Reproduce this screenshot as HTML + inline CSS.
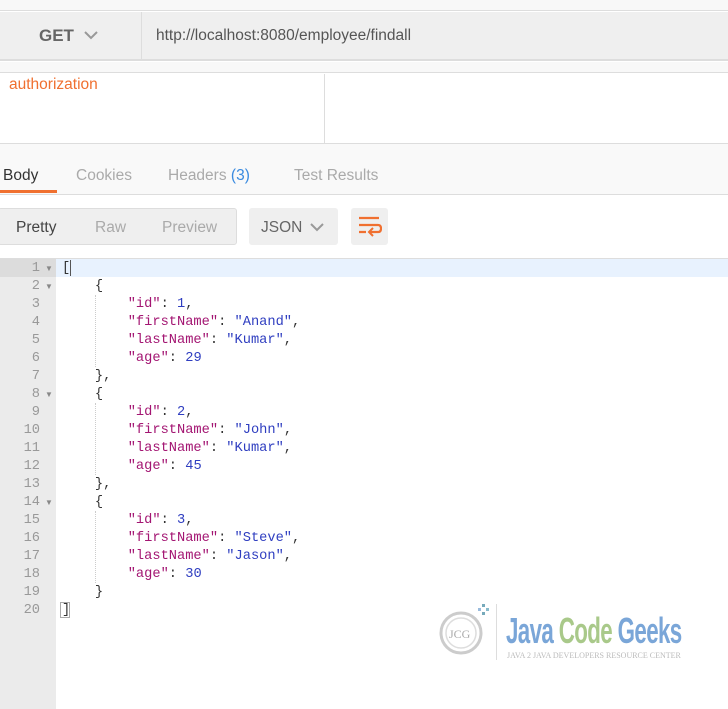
<!DOCTYPE html>
<html><head><meta charset="utf-8"><style>
*{margin:0;padding:0;box-sizing:border-box}
body{width:728px;height:709px;overflow:hidden;background:#fff;font-family:"Liberation Sans",sans-serif;position:relative}
.a{position:absolute}
.code{font-family:"Liberation Mono",monospace;font-size:13.7px;line-height:18px;white-space:pre;color:#333}
.k{color:#a31572}.s{color:#2f3ec0}.n{color:#2f3ec0}
.ln{font-family:"Liberation Mono",monospace;font-size:13.7px;line-height:18px;color:#999;text-align:right;width:40px;white-space:pre}
</style></head><body>
<div class="a" style="left:0;top:0;width:728px;height:11px;background:#f8f8f8;border-bottom:1px solid #ddd"></div>
<div class="a" style="left:0;top:12px;width:728px;height:49px;background:#efefef;border-bottom:2px solid #ddd"></div>
<div class="a" style="left:141px;top:12px;width:1px;height:48px;background:#ddd"></div>
<div class="a" style="left:39px;top:26px;font-size:17px;font-weight:bold;color:#666">GET</div>
<svg class="a" style="left:83px;top:30px" width="16" height="10"><path d="M2 2 L8 8 L14 2" stroke="#999" stroke-width="2" fill="none"/></svg>
<div class="a" style="left:156px;top:27px;font-size:15.5px;color:#555">http://localhost:8080/employee/findall</div>
<div class="a" style="left:0;top:62px;width:728px;height:11px;background:#f8f8f8;border-bottom:1px solid #ddd"></div>
<div class="a" style="left:9px;top:76px;font-size:15.5px;color:#f07030">authorization</div>
<div class="a" style="left:324px;top:74px;width:1px;height:69px;background:#ddd"></div>
<div class="a" style="left:0;top:143px;width:728px;height:52px;background:#f9f9f9;border-top:1px solid #ddd;border-bottom:1px solid #ddd"></div>
<div class="a" style="left:3px;top:167px;font-size:15.5px;color:#333">Body</div>
<div class="a" style="left:0;top:190px;width:57px;height:3px;background:#f07030"></div>
<div class="a" style="left:76px;top:167px;font-size:15.5px;color:#aaa">Cookies</div>
<div class="a" style="left:168px;top:167px;font-size:15.5px;color:#aaa">Headers <span style="color:#3a8be0">(3)</span></div>
<div class="a" style="left:294px;top:167px;font-size:15.5px;color:#aaa">Test Results</div>
<div class="a" style="left:-2px;top:208px;width:239px;height:37px;background:#efefef;border:1px solid #ddd;border-radius:3px"></div>
<div class="a" style="left:16px;top:219px;font-size:15.5px;color:#444">Pretty</div>
<div class="a" style="left:95px;top:219px;font-size:15.5px;color:#aaa">Raw</div>
<div class="a" style="left:162px;top:219px;font-size:15.5px;color:#aaa">Preview</div>
<div class="a" style="left:249px;top:208px;width:89px;height:37px;background:#efefef;border-radius:3px"></div>
<div class="a" style="left:261px;top:219px;font-size:15.5px;color:#666">JSON</div>
<svg class="a" style="left:309px;top:222px" width="16" height="10"><path d="M2 2 L8 8 L14 2" stroke="#999" stroke-width="2" fill="none"/></svg>
<div class="a" style="left:351px;top:208px;width:37px;height:37px;background:#efefef;border-radius:3px"></div>
<svg class="a" style="left:358px;top:215px" width="24" height="22"><path d="M1 3H21M1 10H20Q23 10 23 13.5Q23 17 20 17H12M1 17H8" stroke="#f07030" stroke-width="2.2" fill="none"/><path d="M15 13L11 17L15 21" stroke="#f07030" stroke-width="2" fill="none"/></svg>
<div class="a" style="left:0;top:258px;width:728px;height:1px;background:#ddd"></div>
<div class="a" style="left:0;top:259px;width:56px;height:450px;background:#ebebeb"></div>
<div class="a" style="left:56px;top:259px;width:672px;height:18px;background:#e8f2fe"></div>
<div class="a" style="left:0;top:259px;width:56px;height:18px;background:#dcdcdc"></div>
<div class="a" style="left:95px;top:295px;height:72px;border-left:1px dotted #ccc"></div>
<div class="a" style="left:95px;top:403px;height:72px;border-left:1px dotted #ccc"></div>
<div class="a" style="left:95px;top:511px;height:72px;border-left:1px dotted #ccc"></div>
<div class="a ln" style="left:0;top:260px">1
2
3
4
5
6
7
8
9
10
11
12
13
14
15
16
17
18
19
20</div>
<div class="a" style="left:45px;top:260px;font-size:8px;line-height:18px;color:#888;white-space:pre">▼
▼





▼





▼</div>
<div class="a code" style="left:62px;top:260px">[
    {
        <span class="k">"id"</span>: <span class="n">1</span>,
        <span class="k">"firstName"</span>: <span class="s">"Anand"</span>,
        <span class="k">"lastName"</span>: <span class="s">"Kumar"</span>,
        <span class="k">"age"</span>: <span class="n">29</span>
    },
    {
        <span class="k">"id"</span>: <span class="n">2</span>,
        <span class="k">"firstName"</span>: <span class="s">"John"</span>,
        <span class="k">"lastName"</span>: <span class="s">"Kumar"</span>,
        <span class="k">"age"</span>: <span class="n">45</span>
    },
    {
        <span class="k">"id"</span>: <span class="n">3</span>,
        <span class="k">"firstName"</span>: <span class="s">"Steve"</span>,
        <span class="k">"lastName"</span>: <span class="s">"Jason"</span>,
        <span class="k">"age"</span>: <span class="n">30</span>
    }
]</div>
<div class="a" style="left:70px;top:260px;width:1px;height:16px;background:#555"></div>
<div class="a" style="left:60px;top:602px;width:10px;height:16px;border:1px solid #aaa"></div>
<svg class="a" style="left:434px;top:600px" width="60" height="60"><circle cx="27" cy="33" r="20" fill="none" stroke="#ccc" stroke-width="3"/><circle cx="27" cy="33" r="15" fill="none" stroke="#ddd" stroke-width="1.5"/><text x="15" y="38" font-family="Liberation Serif" font-size="12" fill="#aaa">JCG</text><rect x="48" y="4" width="3" height="3" fill="#7ab"/><rect x="52" y="8" width="3" height="3" fill="#8bc"/><rect x="44" y="8" width="3" height="3" fill="#9bd"/><rect x="48" y="12" width="3" height="3" fill="#7ab"/></svg>
<div class="a" style="left:496px;top:604px;width:1px;height:56px;background:#ddd"></div>
<div class="a" style="left:506px;top:610px;font-size:36px;font-weight:bold;letter-spacing:-1px;transform:scaleX(0.62);transform-origin:left;white-space:nowrap"><span style="color:#7aa6d8">Java</span> <span style="color:#a9c98a">Code</span> <span style="color:#7aa6d8">Geeks</span></div>
<div class="a" style="left:507px;top:651px;font-family:'Liberation Serif',serif;font-size:8px;color:#bbb;white-space:nowrap">JAVA 2 JAVA DEVELOPERS RESOURCE CENTER</div>
</body></html>
